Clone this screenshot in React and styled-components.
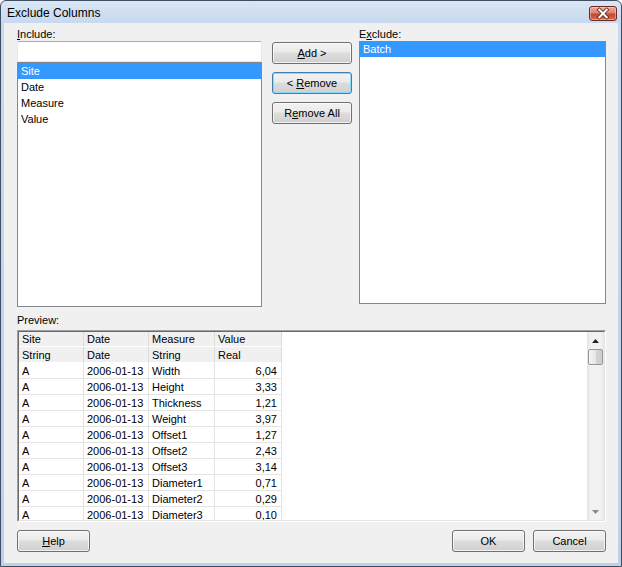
import React from "react";
import styled, { createGlobalStyle } from "styled-components";

const GlobalStyle = createGlobalStyle`
  html, body {
    margin: 0;
    padding: 0;
    background: #ffffff;
  }
  body {
    font-family: "Liberation Sans", Arial, sans-serif;
    font-size: 11px;
    color: #000000;
  }
`;

const includeItems = ["Site", "Date", "Measure", "Value"];
const excludeItems = ["Batch"];

const columns = [
  { name: "Site", type: "String", width: 65 },
  { name: "Date", type: "Date", width: 65 },
  { name: "Measure", type: "String", width: 66 },
  { name: "Value", type: "Real", width: 67, right: true },
];

const rows = [
  ["A", "2006-01-13", "Width", "6,04"],
  ["A", "2006-01-13", "Height", "3,33"],
  ["A", "2006-01-13", "Thickness", "1,21"],
  ["A", "2006-01-13", "Weight", "3,97"],
  ["A", "2006-01-13", "Offset1", "1,27"],
  ["A", "2006-01-13", "Offset2", "2,43"],
  ["A", "2006-01-13", "Offset3", "3,14"],
  ["A", "2006-01-13", "Diameter1", "0,71"],
  ["A", "2006-01-13", "Diameter2", "0,29"],
  ["A", "2006-01-13", "Diameter3", "0,10"],
];

function App() {
  return (
    <>
      <GlobalStyle />
      <Window>
        <TitleBar>
          <Title>Exclude Columns</Title>
          <CloseButton>
            <svg width="28" height="15" viewBox="0 0 28 15">
              <path d="M10 3.5 L18 11.5 M18 3.5 L10 11.5" stroke="#5a2418" strokeWidth="4" strokeLinecap="square" />
              <path d="M10 3.5 L18 11.5 M18 3.5 L10 11.5" stroke="#ffffff" strokeWidth="2.2" strokeLinecap="square" />
            </svg>
          </CloseButton>
        </TitleBar>
        <Client>
          <TopRow>
            <Column width={245}>
              <Label>
                <u>I</u>nclude:
              </Label>
              <TextInput />
              <ListBox height={245}>
                {includeItems.map((item, i) => (
                  <ListItem key={item} selected={i === 0} rowHeight={16}>
                    {item}
                  </ListItem>
                ))}
              </ListBox>
            </Column>
            <ButtonColumn>
              <Button>
                <u>A</u>dd &gt;
              </Button>
              <Button focused>
                &lt; <u>R</u>emove
              </Button>
              <Button>
                R<u>e</u>move All
              </Button>
            </ButtonColumn>
            <Column width={247}>
              <Label>
                E<u>x</u>clude:
              </Label>
              <ListBox height={263}>
                {excludeItems.map((item) => (
                  <ListItem key={item} selected rowHeight={15}>
                    {item}
                  </ListItem>
                ))}
              </ListBox>
            </Column>
          </TopRow>

          <PreviewLabel>Preview:</PreviewLabel>
          <GridFrame>
            <GridInner>
              <TableArea>
                <Table>
                  <colgroup>
                    {columns.map((c) => (
                      <col key={c.name} style={{ width: c.width }} />
                    ))}
                  </colgroup>
                  <thead>
                    <tr>
                      {columns.map((c) => (
                        <HeadCell key={c.name}>{c.name}</HeadCell>
                      ))}
                    </tr>
                    <tr>
                      {columns.map((c) => (
                        <HeadCell key={c.name}>{c.type}</HeadCell>
                      ))}
                    </tr>
                  </thead>
                  <tbody>
                    {rows.map((r, ri) => (
                      <tr key={ri}>
                        {r.map((v, ci) => (
                          <Cell key={ci} right={columns[ci].right}>
                            {v}
                          </Cell>
                        ))}
                      </tr>
                    ))}
                  </tbody>
                </Table>
              </TableArea>
              <ScrollBar>
                <ArrowButton>
                  <svg width="7" height="4" viewBox="0 0 7 4">
                    <path d="M0 4 L3.5 0 L7 4 Z" fill="#222" />
                  </svg>
                </ArrowButton>
                <Thumb />
                <Track />
                <ArrowButton>
                  <svg width="7" height="4" viewBox="0 0 7 4">
                    <path d="M0 0 L3.5 4 L7 0 Z" fill="#8a8a8a" />
                  </svg>
                </ArrowButton>
              </ScrollBar>
            </GridInner>
          </GridFrame>

          <BottomRow>
            <Button width={73}>
              <u>H</u>elp
            </Button>
            <ButtonGroup>
              <Button width={73}>OK</Button>
              <Button width={73}>Cancel</Button>
            </ButtonGroup>
          </BottomRow>
        </Client>
      </Window>
    </>
  );
}

const Window = styled.div`
  width: 622px;
  height: 567px;
  box-sizing: border-box;
  display: flex;
  flex-direction: column;
  border: 1px solid #3e4f63;
  border-radius: 6px 6px 0 0;
  background: linear-gradient(#dae6f4, #c6d9ee 22px, #bcd2ea);
  padding: 0 3px 3px;
`;

const TitleBar = styled.div`
  height: 22px;
  display: flex;
  align-items: center;
  justify-content: space-between;
  padding: 0 0 0 3px;
`;

const Title = styled.div`
  font-size: 12px;
  color: #000000;
  padding-top: 1px;
`;

const CloseButton = styled.div`
  width: 28px;
  height: 15px;
  box-sizing: border-box;
  margin-top: 2px;
  margin-right: 1px;
  border: 1px solid #6d2b1f;
  border-radius: 3px;
  display: flex;
  align-items: center;
  justify-content: center;
  background: linear-gradient(#e9a99b, #d98472 45%, #c5452f 55%, #d46a4f);
  box-shadow: inset 0 0 0 1px rgba(255, 220, 210, 0.5);
  svg {
    display: block;
  }
`;

const Client = styled.div`
  flex: 1;
  display: flex;
  flex-direction: column;
  background: #f0f0f0;
  padding: 4px 12px 0 13px;
`;

const TopRow = styled.div`
  display: flex;
  align-items: flex-start;
`;

const Column = styled.div`
  width: ${(p) => p.width}px;
  display: flex;
  flex-direction: column;
`;

const Label = styled.div`
  height: 14px;
  line-height: 14px;
  white-space: nowrap;
`;

const PreviewLabel = styled(Label)`
  margin-top: 6px;
`;

const TextInput = styled.div`
  height: 21px;
  box-sizing: border-box;
  background: #ffffff;
  border: 1px solid #e3e9ef;
  border-top-color: #abadb3;
  border-radius: 2px 2px 0 0;
`;

const ListBox = styled.div`
  height: ${(p) => p.height}px;
  box-sizing: border-box;
  background: #ffffff;
  border: 1px solid #828790;
  padding: 0;
  overflow: hidden;
`;

const ListItem = styled.div`
  height: ${(p) => p.rowHeight}px;
  line-height: ${(p) => p.rowHeight}px;
  padding-left: 3px;
  white-space: nowrap;
  background: ${(p) => (p.selected ? "#3399ff" : "transparent")};
  color: ${(p) => (p.selected ? "#ffffff" : "#000000")};
`;

const ButtonColumn = styled.div`
  display: flex;
  flex-direction: column;
  gap: 8px;
  margin: 15px 7px 0 10px;
`;

const Button = styled.button`
  width: ${(p) => p.width || 80}px;
  height: 22px;
  box-sizing: border-box;
  padding: 0;
  font-family: "Liberation Sans", Arial, sans-serif;
  font-size: 11px;
  color: #000000;
  border: 1px solid ${(p) => (p.focused ? "#3c7fb1" : "#707070")};
  border-radius: 3px;
  background: linear-gradient(#f2f2f2 0%, #ebebeb 45%, #dddddd 50%, #cfcfcf 100%);
  box-shadow: inset 0 0 0 1px ${(p) => (p.focused ? "#8fd6fb" : "rgba(255,255,255,0.7)")};
  cursor: default;
`;

const GridFrame = styled.div`
  margin-top: 3px;
  height: 192px;
  box-sizing: border-box;
  border: 1px solid;
  border-color: #a0a0a0 #ffffff #ffffff #a0a0a0;
`;

const GridInner = styled.div`
  height: 100%;
  box-sizing: border-box;
  border: 1px solid;
  border-color: #696969 #e3e3e3 #e3e3e3 #696969;
  display: flex;
  background: #ffffff;
`;

const TableArea = styled.div`
  flex: 1;
  overflow: hidden;
  background: #ffffff;
`;

const Table = styled.table`
  table-layout: fixed;
  border-collapse: separate;
  border-spacing: 0;
  width: 263px;
  font-size: 11px;
  margin-top: -1px;
`;

const HeadCell = styled.th`
  height: 16px;
  box-sizing: border-box;
  padding: 0 3px;
  font-weight: normal;
  text-align: left;
  background: #f0f0f0;
  border-right: 1px solid #dcdcdc;
  border-bottom: 1px solid #ffffff;
  white-space: nowrap;
  overflow: hidden;
`;

const Cell = styled.td`
  height: 16px;
  box-sizing: border-box;
  padding: 0 4px 0 3px;
  text-align: ${(p) => (p.right ? "right" : "left")};
  border-right: 1px solid #e3e3e3;
  border-bottom: 1px solid #e3e3e3;
  white-space: nowrap;
  overflow: hidden;
`;

const ScrollBar = styled.div`
  width: 17px;
  display: flex;
  flex-direction: column;
  align-items: center;
  background: linear-gradient(90deg, #e3e3e3, #f2f2f2 20%, #f2f2f2 80%, #e8e8e8);
`;

const ArrowButton = styled.div`
  width: 17px;
  height: 17px;
  display: flex;
  align-items: center;
  justify-content: center;
`;

const Thumb = styled.div`
  width: 15px;
  height: 16px;
  box-sizing: border-box;
  border: 1px solid #979797;
  border-radius: 2px;
  background: linear-gradient(90deg, #f5f5f5, #e6e6e6 50%, #d4d4d4 55%, #cdcdcd);
`;

const Track = styled.div`
  flex: 1;
`;

const BottomRow = styled.div`
  margin-top: 8px;
  display: flex;
  justify-content: space-between;
`;

const ButtonGroup = styled.div`
  display: flex;
  gap: 8px;
`;

export default App;
